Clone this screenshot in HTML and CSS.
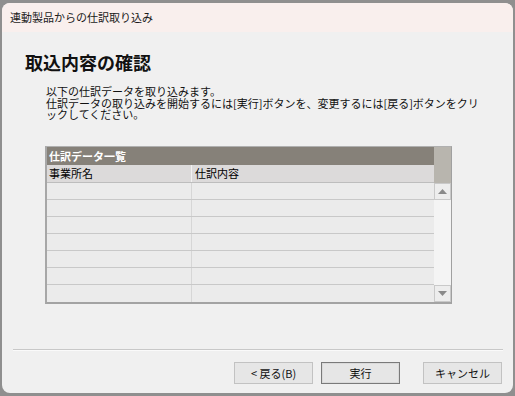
FILE: index.html
```html
<!DOCTYPE html>
<html lang="ja">
<head>
<meta charset="utf-8">
<link rel="stylesheet" href="styles.css">
</head>
<body>
<div class="window">
  <div class="titlebar">連動製品からの仕訳取り込み</div>
  <div class="content">
    <h1 class="heading">取込内容の確認</h1>
    <div class="desc">
      <div class="line">以下の仕訳データを取り込みます。</div>
      <div class="line">仕訳データの取り込みを開始するには[実行]ボタンを、変更するには[戻る]ボタンをクリ</div>
      <div class="line">ックしてください。</div>
    </div>
    <div class="table">
      <div class="grid">
        <div class="caption">仕訳データ一覧</div>
        <div class="row head"><div class="c1">事業所名</div><div class="c2">仕訳内容</div></div>
        <div class="row"><div class="c1"></div><div class="c2"></div></div>
        <div class="row"><div class="c1"></div><div class="c2"></div></div>
        <div class="row"><div class="c1"></div><div class="c2"></div></div>
        <div class="row"><div class="c1"></div><div class="c2"></div></div>
        <div class="row"><div class="c1"></div><div class="c2"></div></div>
        <div class="row"><div class="c1"></div><div class="c2"></div></div>
        <div class="row last"><div class="c1"></div><div class="c2"></div></div>
      </div>
      <div class="scroll">
        <div class="scroll-top"></div>
        <div class="sbtn"><svg width="9" height="5" viewBox="0 0 9 5"><polygon points="0,5 9,5 4.5,0" fill="#8a8a8a"/></svg></div>
        <div class="track"></div>
        <div class="sbtn"><svg width="9" height="5" viewBox="0 0 9 5"><polygon points="0,0 9,0 4.5,5" fill="#8a8a8a"/></svg></div>
      </div>
    </div>
  </div>
  <div class="sep"></div>
  <div class="buttons">
    <button class="btn">&lt; 戻る(B)</button>
    <button class="btn default">実行</button>
    <button class="btn cancel">キャンセル</button>
  </div>
</div>
</body>
</html>
```
FILE: styles.css
```css
html, body {
  margin: 0;
  padding: 0;
}
body {
  width: 515px;
  height: 396px;
  background: #8f8f8f;
  padding: 3px 2px 3px 2px;
  box-sizing: border-box;
  font-family: "Noto Sans CJK JP", "Noto Sans", sans-serif;
  color: #000;
}
.window {
  width: 511px;
  height: 390px;
  background: #f0f0f0;
  border-radius: 8px;
  overflow: hidden;
  display: flex;
  flex-direction: column;
}
.titlebar {
  height: 29px;
  background: #f9efed;
  font-size: 11px;
  line-height: 29px;
  padding-left: 8px;
  color: #1a1a1a;
}
.content {
  padding: 19px 0 0 23px;
  height: 273px;
  box-sizing: border-box;
}
.heading {
  margin: 0;
  font-size: 18px;
  line-height: 22px;
  font-weight: bold;
  color: #111;
}
.desc {
  margin: 13px 0 0 21px;
  font-size: 11px;
  color: #111;
  white-space: nowrap;
  height: 36px;
}
.line {
  height: 11.6px;
  line-height: 11.6px;
  overflow: visible;
}
.table {
  margin: 24px 0 0 20px;
  width: 407px;
  height: 158px;
  display: flex;
  box-sizing: border-box;
  border-left: 2px solid #a7a7a7;
  border-bottom: 2px solid #a3a3a3;
  border-top: 1px solid #b0b0b0;
  border-right: 1px solid #a0a0a0;
}
.grid {
  flex: 1;
  display: flex;
  flex-direction: column;
  background: #ebebeb;
}
.caption {
  height: 18px;
  background: #868179;
  color: #fff;
  font-weight: bold;
  font-size: 11px;
  line-height: 18px;
  padding-left: 2px;
}
.row {
  display: flex;
  height: 17.4px;
  box-sizing: border-box;
  border-bottom: 1px solid #c8c8c8;
}
.row.last {
  border-bottom: none;
}
.row.head {
  height: 18px;
  background: #dcdada;
  border-bottom: 1px solid #bdbdbd;
  font-size: 11px;
  line-height: 17px;
}
.c1 {
  width: 145px;
  border-right: 1px solid #d6d6d6;
  padding-left: 2px;
  box-sizing: border-box;
}
.head .c1 {
  border-right: 1px solid #f2f2f2;
}
.c2 {
  flex: 1;
  padding-left: 3px;
}
.scroll {
  width: 17px;
  display: flex;
  flex-direction: column;
  background: #f4f4f4;
}
.scroll-top {
  height: 36px;
  background: #b8b5ae;
}
.sbtn {
  height: 17px;
  box-sizing: border-box;
  border: 1px solid #c9c9c9;
  background: #ededed;
  display: flex;
  align-items: center;
  justify-content: center;
}
.track {
  flex: 1;
}
.sep {
  margin: 44px 0 0 11px;
  width: 490px;
  height: 1px;
  background: #c8c8c8;
  border-bottom: 1px solid #fafafa;
}
.buttons {
  margin-top: 11px;
  display: flex;
  justify-content: flex-end;
  padding-right: 11px;
}
.btn {
  width: 79px;
  height: 22px;
  box-sizing: border-box;
  border: 1px solid #c2c2c2;
  background: #e6e6e6;
  font-family: "Noto Sans CJK JP", "Noto Sans", sans-serif;
  font-size: 11px;
  line-height: 18px;
  color: #111;
  padding: 0;
  margin: 0;
  white-space: pre;
}
.btn.default {
  margin-left: 8px;
  border: 1px solid #7a7a7a;
  box-shadow: inset 0 0 0 1px #dadada;
}
.btn.cancel {
  margin-left: 23px;
}
```
